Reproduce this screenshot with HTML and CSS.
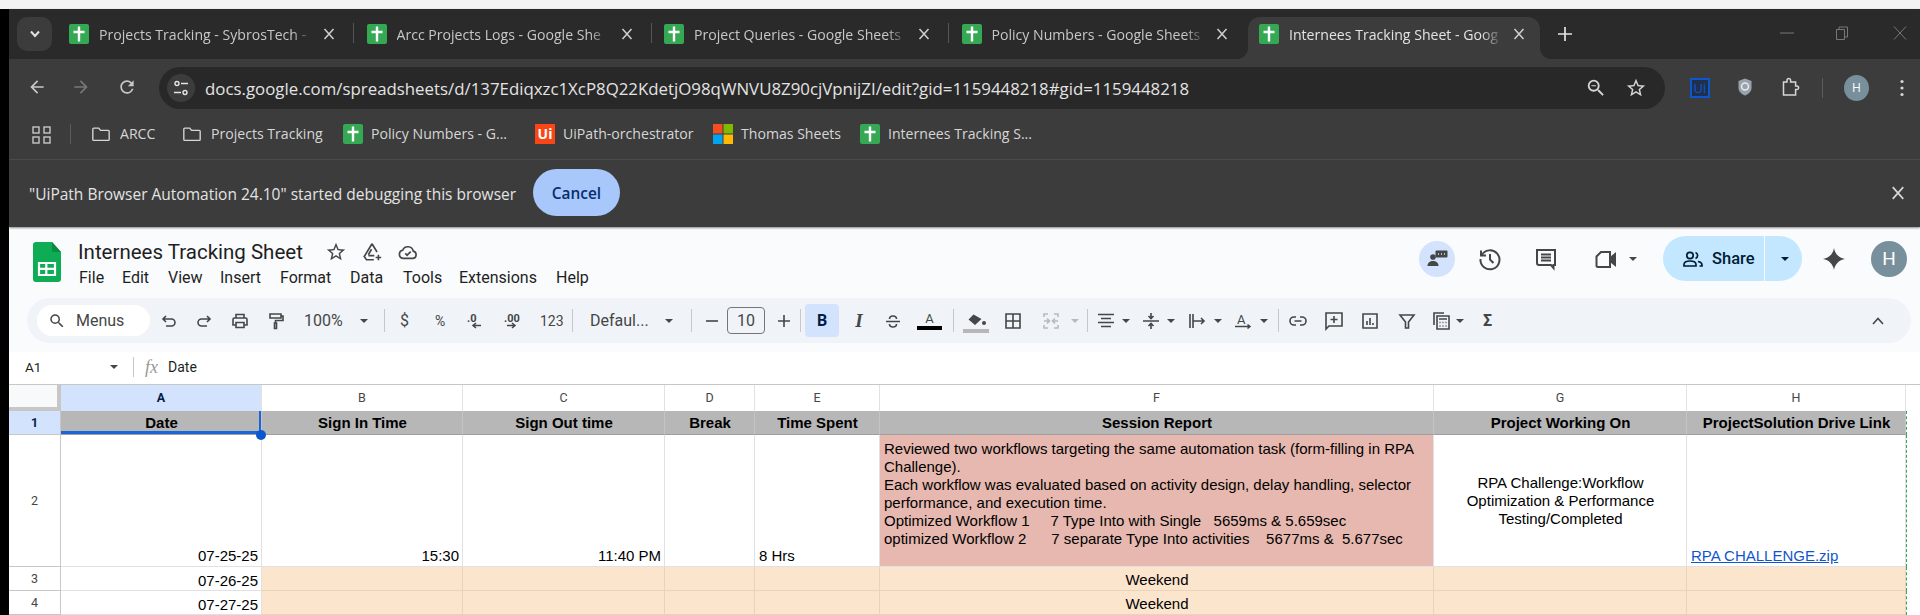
FILE: index.html
```html
<!DOCTYPE html>
<html lang="en">
<head>
<meta charset="utf-8">
<title>Internees Tracking Sheet</title>
<link rel="stylesheet" href="styles.css">
</head>
<body>
<svg class="defs" width="0" height="0">
  <symbol id="sheet" viewBox="0 0 20 20"><rect width="20" height="20" rx="2" fill="#34a853"/><path d="M10 2.5v15M4.5 8h11" stroke="#fff" stroke-width="2.4"/></symbol>
  <symbol id="x" viewBox="0 0 12 12"><path d="M1.5 1 10.5 11M10.5 1 1.500 11" stroke="currentColor" stroke-width="1.500" fill="none"/></symbol>
  <symbol id="folder" viewBox="0 0 22 20"><path d="M2 4.500a1 1 0 0 1 1-1h5.500l2 2.500H19a1 1 0 0 1 1 1V16a1 1 0 0 1-1 1H3a1 1 0 0 1-1-1z" fill="none" stroke="#d6d6d6" stroke-width="1.500"/></symbol>
  <symbol id="caret" viewBox="0 0 8 4"><path d="M0 0h8L4 4z" fill="currentColor"/></symbol>
</svg>
<div class="top-edge"></div>
<div class="screen">
  <header class="browser">
    <div class="tabstrip">
      <button class="tab-search"><svg width="12" height="8" viewBox="0 0 12 8"><path d="M2 1.500 6 6l4-4.500" stroke="#e3e3e3" stroke-width="2" fill="none"/></svg></button>
      <div class="tab"><svg class="fav"><use href="#sheet"/></svg><span class="tab-title">Projects Tracking - SybrosTech -</span><svg class="tab-x"><use href="#x"/></svg><i class="tab-sep"></i></div>
      <div class="tab"><svg class="fav"><use href="#sheet"/></svg><span class="tab-title">Arcc Projects Logs - Google She</span><svg class="tab-x"><use href="#x"/></svg><i class="tab-sep"></i></div>
      <div class="tab"><svg class="fav"><use href="#sheet"/></svg><span class="tab-title">Project Queries - Google Sheets</span><svg class="tab-x"><use href="#x"/></svg><i class="tab-sep"></i></div>
      <div class="tab"><svg class="fav"><use href="#sheet"/></svg><span class="tab-title">Policy Numbers - Google Sheets</span><svg class="tab-x"><use href="#x"/></svg></div>
      <div class="tab tab-active"><svg class="fav"><use href="#sheet"/></svg><span class="tab-title">Internees Tracking Sheet - Goog</span><svg class="tab-x"><use href="#x"/></svg></div>
      <svg class="new-tab" width="16" height="16" viewBox="0 0 16 16"><path d="M8 1v14M1 8h14" stroke="#e3e3e3" stroke-width="1.700"/></svg>
      <div class="win-controls">
        <svg width="16" height="16" viewBox="0 0 16 16"><path d="M1 8h14" stroke="#777" stroke-width="1"/></svg>
        <svg width="16" height="16" viewBox="0 0 16 16"><path d="M2.500 4.500h8v10h-8zM5 4.500V2h8.500v10h-3" stroke="#777" fill="none"/></svg>
        <svg width="16" height="16" viewBox="0 0 16 16"><path d="M2 1.500 14 14.500M14 1.500 2 14.500" stroke="#777" fill="none"/></svg>
      </div>
    </div>
    <div class="navbar">
      <svg class="nav-i" viewBox="0 0 24 24"><path fill="#c7c7c7" d="M20 11H7.830l5.590-5.590L12 4l-8 8 8 8 1.410-1.410L7.830 13H20v-2z"/></svg>
      <svg class="nav-i" viewBox="0 0 24 24"><path fill="#777" d="M12 4l-1.410 1.410L16.170 11H4v2h12.170l-5.580 5.590L12 20l8-8z"/></svg>
      <svg class="nav-i" viewBox="0 0 24 24"><path fill="#c7c7c7" d="M17.650 6.350A7.958 7.958 0 0 0 12 4c-4.420 0-7.990 3.580-7.990 8s3.570 8 7.990 8c3.730 0 6.840-2.550 7.730-6h-2.080A5.990 5.990 0 0 1 12 18c-3.310 0-6-2.690-6-6s2.690-6 6-6c1.660 0 3.140.690 4.220 1.780L13 11h7V4l-2.350 2.350z"/></svg>
      <div class="omnibox">
        <span class="site-chip"><svg width="16" height="18" viewBox="0 0 16 18"><g fill="none" stroke="#e3e3e3" stroke-width="1.400"><circle cx="4" cy="4.500" r="2"/><path d="M8 4.500h7M1 13.500h7"/><circle cx="12" cy="13.500" r="2"/></g></svg></span>
        <span class="url">docs.google.com/spreadsheets/d/137Ediqxzc1XcP8Q22KdetjO98qWNVU8Z90cjVpnijZI/edit?gid=1159448218#gid=1159448218</span>
        <svg class="omni-i" viewBox="0 0 24 24"><path fill="#d6d6d6" d="M15.500 14h-.790l-.280-.270A6.470 6.470 0 0 0 16 9.500 6.500 6.500 0 1 0 9.500 16c1.610 0 3.090-.590 4.230-1.570l.270.280v.790l5 4.990L20.490 19l-4.990-5zm-6 0C7.010 14 5 11.990 5 9.500S7.010 5 9.500 5 14 7.010 14 9.500 11.990 14 9.500 14zM7 9h5v1H7z"/></svg>
        <svg class="omni-i omni-star" viewBox="0 0 24 24"><path fill="#d6d6d6" d="M22 9.240l-7.190-.620L12 2 9.190 8.630 2 9.240l5.460 4.730L5.820 21 12 17.270 18.180 21l-1.630-7.030L22 9.240zM12 15.400l-3.760 2.270 1-4.280-3.320-2.880 4.380-.380L12 6.100l1.710 4.040 4.380.380-3.320 2.880 1 4.280L12 15.400z"/></svg>
      </div>
      <span class="ext-ui">Ui</span>
      <svg class="nav-i" viewBox="0 0 20 20"><path d="M10 1.500 16.500 4v7c0 3.500-3 6-6.500 7.500C6.500 17 3.500 14.500 3.500 11V4z" fill="#9aa3ad"/><circle cx="10" cy="9.500" r="3.500" fill="none" stroke="#e8eaed" stroke-width="1.500"/></svg>
      <svg class="nav-i" viewBox="0 0 20 20"><path d="M3.500 5H7V3.200a1.800 1.800 0 0 1 3.600 0V5h5v4h1.200a1.800 1.800 0 0 1 0 3.600h-1.200V18H3.500z" fill="none" stroke="#d6d6d6" stroke-width="1.500"/></svg>
      <i class="nav-sep"></i>
      <span class="nav-avatar">H</span>
      <svg class="kebab" width="4" height="18" viewBox="0 0 4 18"><g fill="#d6d6d6"><circle cx="2" cy="2.500" r="1.600"/><circle cx="2" cy="9" r="1.600"/><circle cx="2" cy="15.500" r="1.600"/></g></svg>
    </div>
    <div class="bookmarks">
      <svg class="bm-apps" width="19" height="18" viewBox="0 0 19 18"><g fill="none" stroke="#c7c7c7" stroke-width="1.400"><rect x="1" y="1" width="6" height="6"/><rect x="12" y="1" width="6" height="6"/><rect x="1" y="11" width="6" height="6"/><rect x="12" y="11" width="6" height="6"/></g></svg>
      <i class="bm-sep"></i>
      <a class="bm bm-folder"><svg class="fav"><use href="#folder"/></svg>ARCC</a>
      <a class="bm bm-folder"><svg class="fav"><use href="#folder"/></svg>Projects Tracking</a>
      <a class="bm"><svg class="fav"><use href="#sheet"/></svg>Policy Numbers - G...</a>
      <a class="bm"><span class="bm-uipath">Ui</span>UiPath-orchestrator</a>
      <a class="bm"><svg class="fav" viewBox="0 0 20 20"><rect width="9.500" height="9.500" fill="#f25022"/><rect x="10.500" width="9.500" height="9.500" fill="#7fba00"/><rect y="10.500" width="9.500" height="9.500" fill="#00a4ef"/><rect x="10.500" y="10.500" width="9.500" height="9.500" fill="#ffb900"/></svg>Thomas Sheets</a>
      <a class="bm"><svg class="fav"><use href="#sheet"/></svg>Internees Tracking S...</a>
    </div>
    <div class="infobar">
      <span class="info-text">"UiPath Browser Automation 24.10" started debugging this browser</span>
      <button class="info-cancel">Cancel</button>
      <svg class="info-x"><use href="#x"/></svg>
    </div>
  </header>

  <main class="sheets">
    <div class="doc-head">
      <svg class="logo" width="28" height="40" viewBox="0 0 28 40"><path d="M3 0h16l9 10v27a3 3 0 0 1-3 3H3a3 3 0 0 1-3-3V3a3 3 0 0 1 3-3z" fill="#0ead55"/><path d="M19 0l9 10h-9z" fill="#0a8a43"/><path d="M6 21h16v12H6zM13.300 21v12M6 26.800h16" fill="none" stroke="#fff" stroke-width="2.200"/></svg>
      <div class="doc-info">
        <div class="doc-title-row">
          <span class="doc-title">Internees Tracking Sheet</span>
          <svg class="ti" viewBox="0 0 24 24"><path fill="#444746" d="M22 9.240l-7.190-.620L12 2 9.190 8.630 2 9.240l5.460 4.730L5.820 21 12 17.270 18.180 21l-1.630-7.030L22 9.240zM12 15.400l-3.760 2.270 1-4.280-3.320-2.880 4.380-.380L12 6.100l1.710 4.040 4.380.380-3.320 2.880 1 4.280L12 15.400z"/></svg>
          <svg class="ti" viewBox="0 0 24 24"><path fill="none" stroke="#444746" stroke-width="1.800" d="M12 3 3.500 17l2.500 3.500h8M12 3l5.500 9M8 15l3.500-6M8 16h6.500M19 15v6M16 18h6"/></svg>
          <svg class="ti" viewBox="0 0 24 24"><path fill="none" stroke="#444746" stroke-width="1.800" d="M7 19a4.500 4.500 0 0 1-.8-8.900 6 6 0 0 1 11.500 1A4 4 0 0 1 17 19zM9 13.500l2 2 4-4"/></svg>
        </div>
        <nav class="menu"><span>File</span><span>Edit</span><span>View</span><span>Insert</span><span>Format</span><span>Data</span><span>Tools</span><span>Extensions</span><span>Help</span></nav>
      </div>
      <div class="doc-actions">
        <span class="present-chip"><svg width="22" height="20" viewBox="0 0 22 20"><circle cx="7" cy="8" r="2.800" fill="#444746"/><path d="M1.500 17c0-3.500 2.500-5 5.500-5s5.500 1.500 5.500 5z" fill="#444746"/><rect x="9.500" y="1.500" width="12" height="7" rx="1" fill="#444746"/><path d="M12 5h1M15 5h1M18 5h1" stroke="#d3e3fd" stroke-width="1.500"/></svg></span>
        <svg class="act" viewBox="0 0 24 24"><path fill="none" stroke="#444746" stroke-width="2" d="M3.500 8.500A9.500 9.500 0 1 1 2.500 12M3 3.500v5h5M12 7v5.500l3.500 3.500"/></svg>
        <svg class="act" viewBox="0 0 24 24"><path fill="none" stroke="#444746" stroke-width="2" d="M3 3h18v15h-1.500v3L17 18H5a2 2 0 0 1-2-2zM7 7.500h10M7 10.500h10M7 13.500h10"/></svg>
        <svg class="act act-meet" viewBox="0 0 24 24"><path fill="none" stroke="#444746" stroke-width="2" d="M7 5h9v15H4a1.500 1.500 0 0 1-1.500-1.500V9.500z"/><path fill="#444746" d="M16 10l6-5v15l-6-5z"/></svg>
        <svg class="car car-dark"><use href="#caret"/></svg>
        <div class="share">
          <span class="share-main"><svg width="20" height="18" viewBox="0 0 20 18"><g fill="none" stroke="#001d35" stroke-width="1.700"><circle cx="7" cy="5.500" r="3.200"/><path d="M1 16v-1.500C1 12 3.500 11 7 11s6 1 6 3.500V16zM12.500 2.500a3.200 3.200 0 0 1 0 6M15 11.500c2.500.500 4 1.500 4 3.500v1h-2.500"/></g></svg>Share</span>
          <span class="share-more"><svg class="car car-share"><use href="#caret"/></svg></span>
        </div>
        <svg class="act" viewBox="0 0 24 24"><path fill="#444746" d="M12 1c1 6 5 10 11 11-6 1-10 5-11 11-1-6-5-10-11-11 6-1 10-5 11-11z"/></svg>
        <span class="doc-avatar">H</span>
      </div>
    </div>

    <div class="toolbar">
      <div class="tb-search"><svg width="18" height="18" viewBox="0 0 24 24"><path fill="#444746" d="M15.500 14h-.790l-.280-.270A6.470 6.470 0 0 0 16 9.500 6.500 6.500 0 1 0 9.500 16c1.610 0 3.090-.590 4.230-1.570l.270.280v.790l5 4.990L20.490 19l-4.990-5zm-6 0C7.010 14 5 11.990 5 9.500S7.010 5 9.500 5 14 7.010 14 9.500 11.990 14 9.500 14z"/></svg><span>Menus</span></div>
      <svg class="ic" viewBox="0 0 18 18"><path d="M6 4 3 7l3 3M3 7h8.500a3.500 3.500 0 0 1 0 7H6" class="st"/></svg>
      <svg class="ic" viewBox="0 0 18 18"><path d="M12 4l3 3-3 3M15 7H6.500a3.500 3.500 0 0 0 0 7H12" class="st"/></svg>
      <svg class="ic" viewBox="0 0 18 18"><path d="M5 6V2.500h8V6M5 13H2V7.500A1.500 1.500 0 0 1 3.500 6h11A1.500 1.500 0 0 1 16 7.500V13h-3M5 10.500h8v5H5z" class="st"/></svg>
      <svg class="ic" viewBox="0 0 18 18"><path d="M3 2h11v4H3zM14 4h2v4.500H8.500V11M7.500 11h2v5.500h-2z" class="st"/></svg>
      <span class="tb-txt">100%</span>
      <svg class="car"><use href="#caret"/></svg>
      <i class="sep"></i>
      <span class="tb-txt">$</span>
      <span class="tb-txt tb-small">%</span>
      <svg class="ic" viewBox="0 0 18 18"><text x="1" y="10" class="dec">.0</text><path d="M15 13.500H7M10 11l-3 2.500 3 2.500" class="st st-thin"/></svg>
      <svg class="ic" viewBox="0 0 18 18"><text x="0" y="10" class="dec">.00</text><path d="M3 13.500h8M8 11l3 2.500L8 16" class="st st-thin"/></svg>
      <span class="tb-txt tb-small">123</span>
      <i class="sep"></i>
      <span class="tb-txt">Defaul...</span>
      <svg class="car"><use href="#caret"/></svg>
      <i class="sep"></i>
      <svg class="ic" viewBox="0 0 18 18"><path d="M3 9h12" class="st"/></svg>
      <span class="size-box">10</span>
      <svg class="ic" viewBox="0 0 18 18"><path d="M3 9h12M9 3v12" class="st"/></svg>
      <i class="sep"></i>
      <span class="bold-btn">B</span>
      <span class="tb-letter tb-i">I</span>
      <svg class="ic" viewBox="0 0 18 18"><path d="M2 9.500h14M12.500 7C12.500 5 11 4 9 4S5.500 5 5.500 7M5.500 12c0 2 1.500 3 3.500 3s3.500-1 3.500-3" class="st"/></svg>
      <span class="color-a">A</span>
      <i class="sep"></i>
      <svg class="ic-fill" width="26" height="24" viewBox="0 0 26 24"><path d="M8 1l2.500 3.500-5 5 6.500 5.500 6.500-6L10.500 4.500z" fill="#444746"/><circle cx="21" cy="13" r="2" fill="#444746"/><rect y="19" width="26" height="4" fill="#b7b7b7"/></svg>
      <svg class="ic" viewBox="0 0 18 18"><path d="M2 2h14v14H2zM9 2v14M2 9h14" class="st"/></svg>
      <svg class="ic" viewBox="0 0 18 18"><path d="M6 2H2v3M12 2h4v3M2 13v3h4M16 13v3h-4M2 9h5M5 6.500 7.500 9 5 11.500M16 9h-5M13 6.500 10.500 9l2.500 2.500" class="st st-off"/></svg>
      <svg class="car car-off"><use href="#caret"/></svg>
      <i class="sep"></i>
      <svg class="ic" viewBox="0 0 18 18"><path d="M1 2.500h16M4 6.500h10M1 10.500h16M4 14.500h10" class="st"/></svg>
      <svg class="car"><use href="#caret"/></svg>
      <svg class="ic" viewBox="0 0 18 18"><path d="M1 9h16M9 1v5M6.500 4 9 6.500 11.500 4M9 17v-5M6.500 14 9 11.500 11.500 14" class="st"/></svg>
      <svg class="car"><use href="#caret"/></svg>
      <svg class="ic" viewBox="0 0 18 18"><path d="M2 2v14M5 2v14M5 9h11M13 6l3 3-3 3" class="st"/></svg>
      <svg class="car"><use href="#caret"/></svg>
      <svg class="ic" viewBox="0 0 18 18"><text x="3" y="12" class="rot">A</text><path d="M1 14.500h15M13.500 12.500 16 14.500l-2.500 2" class="st st-thin"/></svg>
      <svg class="car"><use href="#caret"/></svg>
      <i class="sep"></i>
      <svg class="ic" viewBox="0 0 18 18"><path d="M7 5H5a4 4 0 0 0 0 8h2M11 5h2a4 4 0 0 1 0 8h-2M5.500 9h7" class="st"/></svg>
      <svg class="ic" viewBox="0 0 18 18"><path d="M1 1h16v13H4l-3 3zM9 4v7M5.500 7.500h7" class="st"/></svg>
      <svg class="ic" viewBox="0 0 18 18"><path d="M2 2h14v14H2zM6 9v4M9 6v7M12 11v2" class="st"/></svg>
      <svg class="ic" viewBox="0 0 18 18"><path d="M2 3h14l-5.500 7v6h-3v-6z" class="st"/></svg>
      <svg class="ic" viewBox="0 0 18 18"><path d="M2 13V1h10M5 17V4h12v13zM7 7h8M7.500 10.500h1M10.500 10.500h1M13.500 10.500h1M7.500 14h1M10.500 14h1M13.500 14h1" class="st"/></svg>
      <svg class="car"><use href="#caret"/></svg>
      <span class="tb-sigma">Σ</span>
      <svg class="ic-chev" width="12" height="8" viewBox="0 0 12 8"><path d="M1 7l5-5.500L11 7" class="st"/></svg>
    </div>

    <div class="formula">
      <span class="name-box">A1</span>
      <svg class="car car-name"><use href="#caret"/></svg>
      <i class="f-sep"></i>
      <span class="fx">fx</span>
      <span class="f-val">Date</span>
    </div>

    <div class="grid">
      <div class="corner"></div>
      <div class="col col-sel">A</div><div class="col">B</div><div class="col">C</div><div class="col">D</div><div class="col">E</div><div class="col">F</div><div class="col">G</div><div class="col">H</div><div class="col col-end"></div>

      <div class="rowh rowh-sel">1</div>
      <div class="c hd hd-sel">Date</div><div class="c hd">Sign In Time</div><div class="c hd">Sign Out time</div><div class="c hd">Break</div><div class="c hd">Time Spent</div><div class="c hd">Session Report</div><div class="c hd">Project Working On</div><div class="c hd">ProjectSolution Drive Link</div><div class="c end end-hd"></div>

      <div class="rowh">2</div>
      <div class="c b r">07-25-25</div><div class="c b r">15:30</div><div class="c b r">11:40 PM</div><div class="c b"></div><div class="c b">8 Hrs</div>
      <div class="c report">Reviewed two workflows targeting the same automation task (form-filling in RPA
Challenge).
Each workflow was evaluated based on activity design, delay handling, selector
performance, and execution time.
Optimized Workflow 1     7 Type Into with Single   5659ms &amp; 5.659sec
optimized Workflow 2      7 separate Type Into activities    5677ms &amp;  5.677sec</div>
      <div class="c mid">RPA Challenge:Workflow
Optimization &amp; Performance
Testing/Completed</div>
      <div class="c b"><a class="link">RPA CHALLENGE.zip</a></div><div class="c end"></div>

      <div class="rowh">3</div>
      <div class="c b b0 r">07-26-25</div><div class="c o"></div><div class="c o"></div><div class="c o"></div><div class="c o"></div><div class="c o w">Weekend</div><div class="c o"></div><div class="c o"></div><div class="c end"></div>

      <div class="rowh">4</div>
      <div class="c b b0 r">07-27-25</div><div class="c o"></div><div class="c o"></div><div class="c o"></div><div class="c o"></div><div class="c o w">Weekend</div><div class="c o"></div><div class="c o"></div><div class="c end"></div>
      <span class="handle"></span>
    </div>
  </main>
</div>
</body>
</html>
```

FILE: styles.css
```css
* { box-sizing: border-box; }
html, body { margin: 0; height: 615px; overflow: hidden; background: #000; }
body { font-family: "Open Sans", "Noto Sans", sans-serif; }
.defs { position: absolute; }
button { border: 0; padding: 0; font: inherit; }
i { display: block; font-style: normal; }

.top-edge { height: 9px; background: #f3f3f3; }
.screen { margin-left: 9px; height: 606px; display: flex; flex-direction: column; position: relative; }

/* Chrome */
.browser { background: #3c3c3c; position: relative; z-index: 2; box-shadow: 0 1px 2px rgba(0,0,0,.45); }
.tabstrip { height: 50px; background: #2a2a2a; display: flex; align-items: flex-end; padding-left: 8px; }
.tab-search { width: 35px; height: 34px; border-radius: 10px; background: #3c3c3c; align-self: flex-start; margin-top: 8px; margin-right: 6px; display: flex; align-items: center; justify-content: center; }
.tab { width: 297.500px; height: 42px; display: flex; align-items: center; padding: 0 0 8px 11px; position: relative; color: #c7c7c7; font-size: 14.100px; }
.fav { width: 20px; height: 20px; flex: none; }
.tab-title { width: 214px; margin-left: 10px; white-space: nowrap; overflow: hidden; -webkit-mask-image: linear-gradient(90deg, #000 90%, transparent 100%); mask-image: linear-gradient(90deg, #000 90%, transparent 100%); }
.tab-x { width: 12px; height: 12px; margin-left: 10px; color: #d0d0d0; flex: none; }
.tab-sep { position: absolute; left: 295px; top: 6px; width: 1px; height: 20px; background: #555; }
.tab-active { background: #3c3c3c; border-radius: 12px 12px 0 0; width: 292px; margin-right: 5px; color: #e3e3e3; }
.tab-active::before, .tab-active::after { content: ""; position: absolute; bottom: 0; width: 12px; height: 12px; }
.tab-active::before { left: -12px; background: radial-gradient(circle at 0 0, transparent 12px, #3c3c3c 12.500px); }
.tab-active::after { right: -12px; background: radial-gradient(circle at 100% 0, transparent 12px, #3c3c3c 12.500px); }
.new-tab { align-self: center; margin-left: 12px; }
.win-controls { margin-left: auto; align-self: center; display: grid; grid-template-columns: 55px 58px 16px; margin-right: 12px; margin-top: -3px; }

.navbar { height: 59px; padding: 8px 0 0 18px; display: grid; grid-template-columns: 44px 46px 42px 1531px 45px 45px 42px 22px 56px auto; align-items: start; }
.nav-i { width: 20px; height: 20px; margin-top: 10px; }
.omnibox { width: 1506px; height: 42px; background: #282828; border-radius: 21px; display: flex; align-items: center; padding-left: 8px; }
.site-chip { width: 28px; height: 28px; border-radius: 50%; background: #3c3c3c; display: flex; align-items: center; justify-content: center; flex: none; }
.url { margin-left: 10px; color: #e3e3e3; font-size: 16.830px; white-space: nowrap; width: 1380px; flex: none; }
.omni-i { width: 22px; height: 22px; flex: none; }
.omni-star { margin-left: 18px; }
.ext-ui { width: 20px; height: 20px; margin-top: 11px; border: 2px solid #0b57d0; color: #0b57d0; font-size: 13px; line-height: 16px; text-align: center; background: #21304a; }
.nav-sep { width: 1px; height: 20px; margin-top: 11px; background: #5c5c5c; }
.nav-avatar { width: 25px; height: 26px; margin-top: 8px; border-radius: 50%; background: #78909c; color: #fff; font-size: 12px; line-height: 26px; text-align: center; }
.kebab { margin-top: 12px; }

.bookmarks { height: 41px; padding: 6px 0 0 23px; display: grid; grid-template-columns: 38px 21px 91px 161px 192px 178px 147px auto; align-items: start; color: #d6d6d6; font-size: 14.100px; }
.bm-apps { margin-top: 2px; }
.bm-sep { width: 1px; height: 20px; background: #5c5c5c; }
.bm { display: flex; align-items: flex-start; gap: 8px; height: 20px; line-height: 20px; white-space: nowrap; }
.bm-folder { gap: 9px; }
.bm-uipath { width: 20px; height: 20px; background: #fa4616; color: #fff; font-weight: 700; font-size: 14px; line-height: 20px; text-align: center; flex: none; }

.infobar { height: 68px; border-top: 1px solid #4b4b4b; display: flex; align-items: center; padding: 0 0 2px 20px; color: #e3e3e3; font-size: 15.500px; }
.info-text { width: 504px; white-space: nowrap; margin-top: 3px; }
.info-cancel { width: 87px; height: 47px; padding-top: 2px; border-radius: 24px; background: #a8c7fa; color: #062e6f; font-size: 15.400px; font-weight: 600; font-family: inherit; }
.info-x { width: 14px; height: 14px; margin-left: auto; margin-right: 15px; color: #d6d6d6; }

/* Sheets */
.sheets { flex: 1; background: #f9fbfd; display: flex; flex-direction: column; color: #1f1f1f; font-family: Roboto, "Open Sans", sans-serif; }
.doc-head { height: 71px; display: flex; padding: 15px 13px 0 24px; flex: none; }
.logo { flex: none; }
.doc-info { margin-left: 17px; margin-top: -2px; }
.doc-title-row { display: flex; align-items: center; height: 24px; }
.doc-title { font-size: 20.500px; width: 222px; white-space: nowrap; }
.ti { width: 22px; height: 22px; margin-left: 14px; }
.ti:first-of-type { margin-left: 25px; }
.menu { font-size: 16px; margin-top: 3px; height: 20px; align-items: center; display: grid; grid-template-columns: 43px 46px 52px 60px 70px 53px 56px 97px auto; margin-left: 1px; }
.doc-actions { margin-left: auto; margin-top: -6px; height: 45px; display: grid; grid-template-columns: 59px 56px 60px 35px 34px 159px 49px 36px; align-items: center; }
.present-chip { width: 36px; height: 36px; border-radius: 50%; background: #d3e3fd; display: flex; align-items: center; justify-content: center; }
.act { width: 24px; height: 24px; }
.share { width: 139px; height: 45px; border-radius: 23px; background: #c2e7ff; display: flex; color: #001d35; font-size: 16.500px; font-weight: 500; }
.share-main { width: 102px; border-right: 1px solid #f9fbfd; display: flex; align-items: center; gap: 9px; padding-left: 20px; }
.share-more { flex: 1; display: flex; align-items: center; justify-content: center; padding-left: 3px; }
.doc-avatar { width: 36px; height: 36px; border-radius: 50%; background: #78909c; color: #fff; font-size: 19px; line-height: 36px; text-align: center; }

.car { width: 8px; height: 4px; color: #444746; }
.car-share { color: #001d35; }
.car-off { color: #b8babc; }

.toolbar { height: 45px; flex: none; margin-left: 18px; width: 1884px; border-radius: 23px; background: #f0f4f9; padding-left: 10px; display: grid; align-items: center; color: #444746; font-size: 16px;
  grid-template-columns: 123px 35px 36px 36px 37px 56px 24px 16px 35px 31px 38px 36px 32px 18px 75px 26px 12px 24px 48px 25px 5px 45px 34px 37px 32px 13px 38px 38px 29px 16px 10px 25px 20px 25px 21px 26px 20px 26px 18px 11px 36px 36px 37px 34px 24px 24px 392px auto; }
.tb-search { width: 113px; height: 31px; border-radius: 16px; background: #fff; display: flex; align-items: center; gap: 10px; padding-left: 11px; }
.ic { width: 18px; height: 18px; overflow: visible; }
.ic-fill { margin-left: -3px; margin-top: 2px; }
.st { fill: none; stroke: #444746; stroke-width: 1.600; }
.st-thin { stroke-width: 1.500; }
.st-off { stroke: #b8babc; }
.dec { font-size: 11px; font-weight: 700; fill: #444746; font-family: Roboto, sans-serif; }
.rot { font-size: 13px; fill: #444746; font-family: Roboto, sans-serif; }
.tb-txt { white-space: nowrap; }
.tb-small { font-size: 14px; }
.sep { width: 1px; height: 23px; background: #c7c7c7; }
.size-box { width: 38px; height: 27px; border: 1px solid #747775; border-radius: 4px; text-align: center; line-height: 25px; }
.bold-btn { width: 34px; height: 33px; border-radius: 4px; background: #d3e3fd; color: #041e49; font-weight: 700; font-size: 16px; line-height: 33px; text-align: center; }
.tb-letter { width: 18px; text-align: center; }
.tb-i { font-family: "Liberation Serif", serif; font-style: italic; font-weight: 700; font-size: 19px; }
.color-a { height: 18px; margin-top: 1px; font-size: 13px; line-height: 14px; text-align: center; border-bottom: 4px solid #000; width: 25px; margin-left: -4px; }
.tb-sigma { font-size: 16px; font-weight: 700; margin-left: 3px; }
.ic-chev { overflow: visible; }

.formula { margin-top: 9px; height: 32px; flex: none; background: #fff; display: flex; align-items: center; padding: 0 0 2px 16px; font-size: 13.500px; color: #1f1f1f; }
.name-box { width: 85px; }
.car-name { flex: none; }
.f-sep { width: 1px; height: 20px; margin-left: 15px; background: #c7c7c7; }
.fx { width: 34px; padding-left: 11px; font-family: "Liberation Serif", serif; font-style: italic; color: #999; font-size: 18px; }
.f-val { color: #1f1f1f; font-size: 14px; }

.grid { flex: 1; position: relative; background: #fff; display: grid; border-top: 1px solid #c7c7c7;
  grid-template-columns: 52px 201px 201px 202px 90px 125px 554px 253px 219px 14px;
  grid-template-rows: 26px 24px 132px 24px 24px;
  font-family: "Liberation Sans", Arial, sans-serif; font-size: 15px; color: #000; line-height: 18px; }
.corner { background: #f8f9fa; border-right: 4px solid #c7c7c7; border-bottom: 4px solid #c7c7c7; }
.col { border-right: 1px solid #e1e3e1; display: flex; align-items: center; justify-content: center; font-size: 12.500px; color: #444746; font-family: Roboto, sans-serif; }
.col-sel { background: #d3e3fd; color: #041e49; font-weight: 700; }
.col-end { border-right: 0; }
.rowh { border-right: 1px solid #c7c7c7; border-bottom: 1px solid #c7c7c7; display: flex; align-items: center; justify-content: center; font-size: 12.500px; color: #444746; font-family: Roboto, sans-serif; background: #fff; }
.rowh-sel { background: #d3e3fd; color: #041e49; font-weight: 700; }
.c { border-right: 1px solid #e1e1e1; border-bottom: 1px solid #e1e1e1; padding: 0 3px 0 4px; white-space: pre; overflow: hidden; }
.hd { background: #b7b7b7; font-weight: 700; text-align: center; border-right-color: #c4c4c4; border-bottom: 1px solid #9e9e9e; display: flex; align-items: center; justify-content: center; }
.hd-sel { box-shadow: inset 0 -3px 0 #1a66d6, inset -2px 0 0 #1a66d6; }
.b { display: flex; align-items: flex-end; padding-bottom: 1px; }
.b0 { padding-bottom: 0; }
.r { justify-content: flex-end; }
.report { background: #e6b8af; padding-top: 5px; }
.mid { display: flex; align-items: center; justify-content: center; text-align: center; }
.link { color: #1155cc; text-decoration: underline; }
.o { background: #fce5cd; border-color: #e8d3bb; }
.w { text-align: center; line-height: 26px; }
.end { border: 0; border-left: 1px dashed #34a853; background: #fff; }
.end-hd { background: #fff; }
.handle { position: absolute; left: 247px; top: 45px; width: 10px; height: 10px; border-radius: 50%; background: #0b57d0; }
```
